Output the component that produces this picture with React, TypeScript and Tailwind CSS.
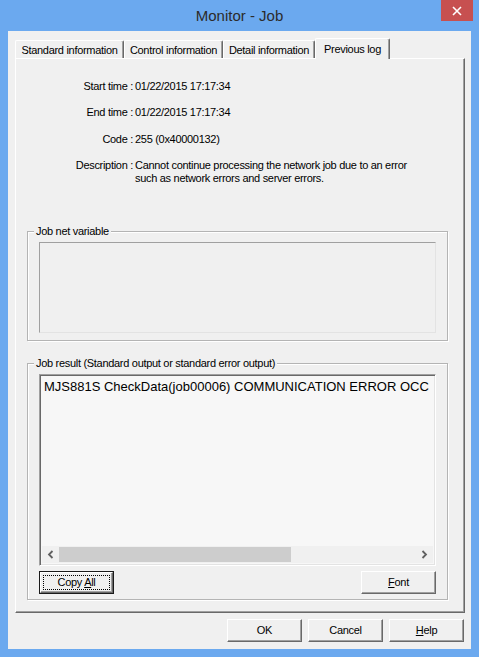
import type React from "react";

const tabs = [
  { label: "Standard information", width: "w-[109px]" },
  { label: "Control information", width: "w-[99px]" },
  { label: "Detail information", width: "w-[92px]" },
];

const info = [
  { label: "Start time", value: ["01/22/2015 17:17:34"] },
  { label: "End time", value: ["01/22/2015 17:17:34"] },
  { label: "Code", value: ["255 (0x40000132)"] },
  {
    label: "Description",
    value: [
      "Cannot continue processing the network job due to an error",
      "such as network errors and server errors.",
    ],
  },
];

const WinButton: React.FC<{ children: React.ReactNode; isDefault?: boolean }> = ({ children, isDefault }) => {
  return (
    <div className={`h-[23px] w-[75px] ${isDefault ? "border border-[#1a1a1a]" : ""}`}>
      <div className="h-full w-full border border-t-white border-l-white border-r-[#696969] border-b-[#696969] shadow-[inset_-1px_-1px_0_#a0a0a0] bg-[#f0f0f0] p-[2px]">
        <div
          className={`h-full w-full flex items-center justify-center text-[11px] tracking-[-0.3px] text-black ${
            isDefault ? "border border-dotted border-black" : ""
          }`}
        >
          {children}
        </div>
      </div>
    </div>
  );
};

const GroupBox: React.FC<{ title: string; className?: string; children: React.ReactNode }> = ({
  title,
  className,
  children,
}) => {
  return (
    <div
      className={`relative w-[421px] border border-[#b4b4b4] shadow-[inset_1px_1px_0_#fff,1px_1px_0_#fff] ${className ?? ""}`}
    >
      <span className="absolute -top-[8px] left-[6px] bg-[#f0f0f0] px-[2px] leading-[14px] text-[11px] tracking-[-0.3px] text-black">
        {title}
      </span>
      {children}
    </div>
  );
};

const App: React.FC = () => {
  return (
    <div className="w-[479px] h-[657px] bg-[#6ba9ef] font-['Liberation_Sans',Arial,sans-serif] flex flex-col select-none">
      {/* Title bar */}
      <div className="relative h-[31px] flex items-center justify-center">
        <span className="text-[15px] text-[#2b2b2b] pt-[1px]">Monitor - Job</span>
        <div className="absolute top-0 right-[6px] w-[32px] h-[21px] bg-[#c75050] flex items-center justify-center">
          <svg width="10" height="10" viewBox="0 0 10 10">
            <path d="M1 1 L9 9 M9 1 L1 9" stroke="#fff" strokeWidth="1.6" />
          </svg>
        </div>
      </div>

      {/* Client area */}
      <div className="mx-[8px] h-[618px] bg-[#f0f0f0] flex flex-col px-[7px] pt-[7px]">
        {/* Tabs */}
        <div className="flex items-end h-[20px]">
          {tabs.map((t) => (
            <div
              key={t.label}
              className={`${t.width} h-[18px] flex items-center justify-center pt-[1px] border-t border-l border-r border-t-white border-l-white border-r-[#696969] shadow-[inset_-1px_0_0_#a0a0a0] rounded-t-[2px] text-[11px] tracking-[-0.3px] text-black`}
            >
              {t.label}
            </div>
          ))}
          <div className="relative z-10 w-[75px] h-[21px] -mb-[1px] flex items-start justify-center pt-[2px] border-t border-l border-r border-t-white border-l-white border-r-[#696969] shadow-[inset_-1px_0_0_#a0a0a0] rounded-t-[2px] bg-[#f0f0f0] text-[11px] tracking-[-0.3px] text-black">
            Previous log
          </div>
        </div>

        {/* Tab panel */}
        <div className="w-[450px] h-[555px] border border-t-white border-l-white border-r-[#696969] border-b-[#696969] shadow-[inset_-1px_-1px_0_#a0a0a0] flex flex-col pl-[11px] pt-[21px]">
          <div className="flex flex-col gap-[13.3px] text-[11px] tracking-[-0.3px] text-black leading-[13px]">
            {info.map((row) => (
              <div key={row.label} className="flex">
                <div className="w-[106px] text-right whitespace-nowrap">{row.label} :</div>
                <div className="pl-[2px] flex flex-col">
                  {row.value.map((v) => (
                    <span key={v} className="whitespace-nowrap">
                      {v}
                    </span>
                  ))}
                </div>
              </div>
            ))}
          </div>

          {/* Job net variable */}
          <GroupBox title="Job net variable" className="mt-[46px] h-[110px] pt-[10px] pl-[11px]">
            <div className="w-[397px] h-[91px] border border-t-[#a0a0a0] border-l-[#a0a0a0] border-r-[#e3e3e3] border-b-[#e3e3e3] bg-[#f0f0f0]" />
          </GroupBox>

          {/* Job result */}
          <GroupBox
            title="Job result (Standard output or standard error output)"
            className="mt-[22px] h-[237px] pt-[10px] pl-[11px]"
          >
            <div className="w-[397px] h-[192px] border border-t-[#a0a0a0] border-l-[#a0a0a0] border-r-white border-b-white bg-[#f7f7f7] shadow-[inset_1px_1px_0_#696969,inset_-1px_-1px_0_#e3e3e3] p-[2px] flex flex-col">
              <div className="flex-1 overflow-hidden pl-[2px] pt-[2px]">
                <div className="whitespace-nowrap text-[13px] leading-[16px] text-black">
                  MJS881S CheckData(job00006) COMMUNICATION ERROR OCC
                </div>
              </div>
              {/* Horizontal scrollbar */}
              <div className="h-[17px] flex items-center bg-[#f0f0f0]">
                <div className="w-[17px] h-full flex items-center justify-center">
                  <svg width="7" height="9" viewBox="0 0 7 9">
                    <path d="M5.5 1 L2 4.5 L5.5 8" stroke="#606060" strokeWidth="1.8" fill="none" />
                  </svg>
                </div>
                <div className="flex-1 h-full flex items-center">
                  <div className="w-[232px] h-[15px] bg-[#cdcdcd]" />
                </div>
                <div className="w-[17px] h-full flex items-center justify-center">
                  <svg width="7" height="9" viewBox="0 0 7 9">
                    <path d="M1.5 1 L5 4.5 L1.5 8" stroke="#606060" strokeWidth="1.8" fill="none" />
                  </svg>
                </div>
              </div>
            </div>
            <div className="w-[397px] flex justify-between mt-[5px]">
              <WinButton isDefault>
                <span>
                  Copy <span className="underline">A</span>ll
                </span>
              </WinButton>
              <WinButton>
                <span>
                  <span className="underline">F</span>ont
                </span>
              </WinButton>
            </div>
          </GroupBox>
        </div>

        {/* Dialog buttons */}
        <div className="flex justify-end gap-[6px] mt-[6px]">
          <WinButton>OK</WinButton>
          <WinButton>Cancel</WinButton>
          <WinButton>
            <span>
              <span className="underline">H</span>elp
            </span>
          </WinButton>
        </div>
      </div>
    </div>
  );
};

export default App;
